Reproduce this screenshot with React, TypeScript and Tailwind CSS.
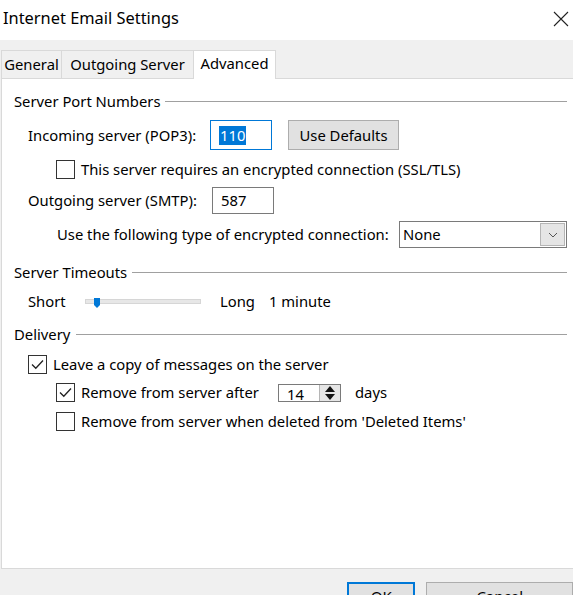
import React from "react";

const font = { fontFamily: '"Segoe UI", "Noto Sans", "Open Sans", sans-serif' };

function Check({ checked }: { checked?: boolean }) {
  return (
    <div className="w-[19px] h-[19px] border border-[#333] bg-white flex items-center justify-center shrink-0">
      {checked && (
        <svg width="15" height="15" viewBox="0 0 15 15">
          <path d="M2 7.5 L5.8 11.3 L13 3.5" fill="none" stroke="#222" strokeWidth="1.3" />
        </svg>
      )}
    </div>
  );
}

function Section({ title, lineStart }: { title: string; lineStart: string }) {
  return (
    <div className="flex items-center h-[20px] pl-[12px] pr-[6px]">
      <span className="text-[14.8px] text-black leading-none">{title}</span>
      <div className={`flex-1 h-px bg-[#a0a0a0] ${lineStart}`} />
    </div>
  );
}

export default function App() {
  return (
    <div className="w-[573px] h-[595px] overflow-hidden bg-[#f0f0f0] text-black" style={font}>
      {/* title bar */}
      <div className="h-[40px] bg-white flex items-center justify-between pl-[3px] pr-[4px]">
        <span className="text-[16.4px] leading-none -mt-[4px]">Internet Email Settings</span>
        <svg width="16" height="16" viewBox="0 0 16 16" className="-mt-[2px]">
          <path d="M1 1 L15 15 M15 1 L1 15" stroke="#222" strokeWidth="1.1" />
        </svg>
      </div>
      {/* tabs */}
      <div className="h-[38px] flex items-end pl-[1px]">
        <div className="h-[28px] w-[61px] flex items-center justify-center border border-b-0 border-[#d9d9d9] bg-[#f0f0f0] text-[14.8px]">General</div>
        <div className="h-[28px] w-[132px] flex items-center justify-center border border-b-0 border-l-0 border-[#d9d9d9] bg-[#f0f0f0] text-[14.8px]">Outgoing Server</div>
        <div className="h-[29px] w-[82px] pb-[3px] flex items-center justify-center border border-b-0 border-l-0 border-[#d9d9d9] bg-white text-[14.8px] relative top-px">Advanced</div>
      </div>
      {/* panel */}
      <div className="h-[491px] ml-px bg-white border-l border-t border-b border-[#d9d9d9] flex flex-col text-[14.8px]">
        <div className="mt-[12px]">
          <Section title="Server Port Numbers" lineStart="ml-[5px]" />
        </div>
        <div className="mt-[9px] h-[30px] flex items-center pl-[26px]">
          <span className="w-[182px]">Incoming server (POP3):</span>
          <div className="w-[62px] h-[30px] border border-[#0078d7] flex items-center pl-[8px]">
            <span className="bg-[#0078d7] text-white leading-[19px] px-px">110</span>
          </div>
          <div className="ml-[16px] w-[111px] h-[30px] bg-[#e1e1e1] border border-[#adadad] flex items-center justify-center">Use Defaults</div>
        </div>
        <div className="mt-[10px] h-[19px] flex items-center pl-[54px] gap-[6px]">
          <Check />
          <span>This server requires an encrypted connection (SSL/TLS)</span>
        </div>
        <div className="mt-[8px] h-[27px] flex items-center pl-[26px]">
          <span className="w-[184px]">Outgoing server (SMTP):</span>
          <div className="w-[62px] h-[27px] border border-[#7a7a7a] flex items-center pl-[8px]">587</div>
        </div>
        <div className="mt-[7px] h-[27px] flex items-center pl-[55px]">
          <span className="w-[342px]">Use the following type of encrypted connection:</span>
          <div className="w-[168px] h-[27px] border border-[#7a7a7a] flex items-center justify-between pl-[3px] pr-px">
            <span>None</span>
            <div className="w-[25px] h-[23px] bg-[#e5e5e5] border border-[#b5b5b5] flex items-center justify-center">
              <svg width="10" height="6" viewBox="0 0 10 6">
                <path d="M1 1 L5 5 L9 1" fill="none" stroke="#555" strokeWidth="1" />
              </svg>
            </div>
          </div>
        </div>
        <div className="mt-[14px]">
          <Section title="Server Timeouts" lineStart="ml-[5px]" />
        </div>
        <div className="mt-[9px] h-[20px] flex items-center pl-[26px]">
          <span className="w-[57px]">Short</span>
          <div className="relative w-[116px] h-[5px] bg-[#e7e7e7] border border-[#d6d6d6]">
            <svg width="6" height="10" viewBox="0 0 6 10" className="absolute left-[8px] -top-[2px]">
              <path d="M0 0 H6 V7 L3 10 L0 7 Z" fill="#0078d7" />
            </svg>
          </div>
          <span className="ml-[19px]">Long</span>
          <span className="ml-[14px]">1 minute</span>
        </div>
        <div className="mt-[13px]">
          <Section title="Delivery" lineStart="ml-[6px]" />
        </div>
        <div className="mt-[11px] h-[19px] flex items-center pl-[26px] gap-[6px]">
          <Check checked />
          <span>Leave a copy of messages on the server</span>
        </div>
        <div className="mt-[9px] h-[19px] flex items-center pl-[54px]">
          <Check checked />
          <span className="ml-[6px] w-[197px]">Remove from server after</span>
          <div className="w-[63px] h-[18px] border border-[#7a7a7a] flex items-center justify-between pl-[8px]">
            <span className="leading-none mt-[4px]">14</span>
            <div className="w-[21px] h-[16px] bg-[#e5e5e5] border-l border-[#b5b5b5] flex flex-col items-center justify-center gap-[2px]">
              <svg width="10" height="6" viewBox="0 0 10 6"><path d="M5 0 L10 6 H0 Z" fill="#111" /></svg>
              <svg width="10" height="6" viewBox="0 0 10 6"><path d="M0 0 H10 L5 6 Z" fill="#111" /></svg>
            </div>
          </div>
          <span className="ml-[14px]">days</span>
        </div>
        <div className="mt-[10px] h-[19px] flex items-center pl-[54px] gap-[6px]">
          <Check />
          <span>Remove from server when deleted from 'Deleted Items'</span>
        </div>
      </div>
      {/* bottom buttons */}
      <div className="flex pl-[347px] gap-[11px] mt-[13px]">
        <div className="w-[70px] h-[30px] border-2 border-[#0078d7] bg-[#e1e1e1] flex items-start justify-center text-[15px] pt-[5px] leading-none">OK</div>
        <div className="w-[150px] h-[30px] border border-[#adadad] bg-[#e1e1e1] flex items-start justify-center text-[15px] pt-[6px] leading-none">Cancel</div>
      </div>
    </div>
  );
}
